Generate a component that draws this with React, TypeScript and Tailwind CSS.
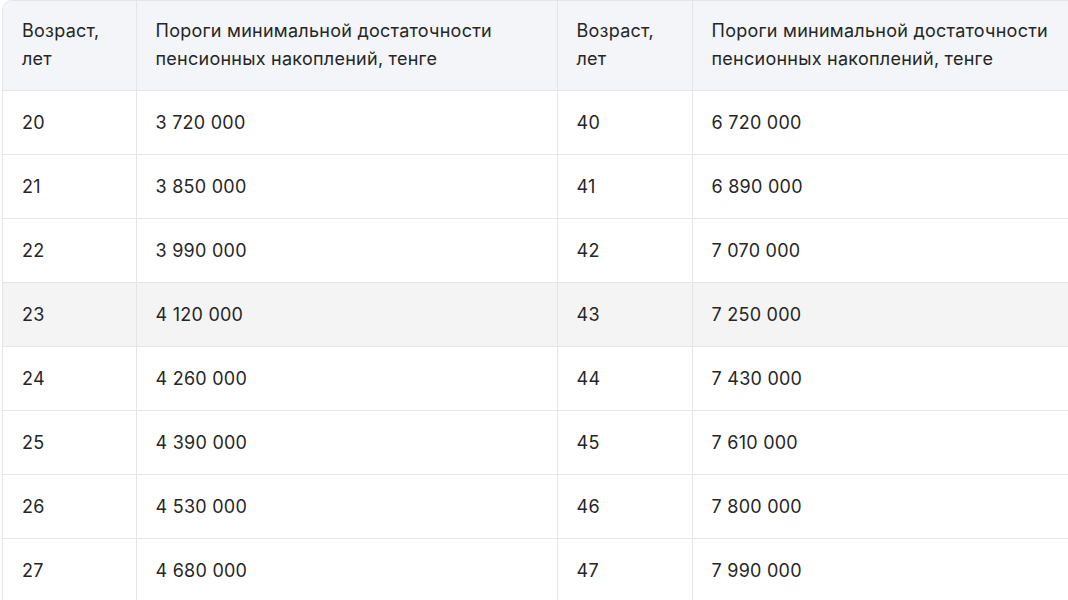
import React from 'react';

const rows = [
  ['20', '3 720 000', '40', '6 720 000'],
  ['21', '3 850 000', '41', '6 890 000'],
  ['22', '3 990 000', '42', '7 070 000'],
  ['23', '4 120 000', '43', '7 250 000'],
  ['24', '4 260 000', '44', '7 430 000'],
  ['25', '4 390 000', '45', '7 610 000'],
  ['26', '4 530 000', '46', '7 800 000'],
  ['27', '4 680 000', '47', '7 990 000'],
];

const App = () => {
  return (
    <div className="w-[1068px] h-[600px] overflow-hidden bg-white">
      <div className="ml-[2px] w-[1090px] rounded-tl-[10px] border-l border-t border-[#e3e5e9] overflow-hidden text-[18px] tracking-[0.25px] text-[#262626] font-['Inter','Open_Sans',sans-serif]">
        <table className="w-[1089px] table-fixed border-collapse">
          <colgroup>
            <col className="w-[133px]" />
            <col className="w-[421px]" />
            <col className="w-[135px]" />
            <col className="w-[400px]" />
          </colgroup>
          <thead>
            <tr className="bg-[#f3f5f8] h-[89px] border-b border-[#e3e5e9]">
              <th className="text-left font-normal align-middle pl-[19px] pr-3 leading-[28px] border-r border-[#e3e5e9]">Возраст, лет</th>
              <th className="text-left font-normal align-middle pl-[19px] pr-3 leading-[28px] border-r border-[#e3e5e9]">Пороги минимальной достаточности пенсионных накоплений, тенге</th>
              <th className="text-left font-normal align-middle pl-[19px] pr-3 leading-[28px] border-r border-[#e3e5e9]">Возраст, лет</th>
              <th className="text-left font-normal align-middle pl-[19px] pr-3 leading-[28px]"><div className="w-[356px]">Пороги минимальной достаточности пенсионных накоплений, тенге</div></th>
            </tr>
          </thead>
          <tbody>
            {rows.map((r, i) => (
              <tr key={i} className={`h-[64px] border-b border-[#e3e5e9] ${i === 3 ? 'bg-[#f4f4f4]' : 'bg-white'}`}>
                {r.map((c, j) => (
                  <td key={j} className={`pl-[19px] align-middle ${j < 3 ? 'border-r border-[#e3e5e9]' : ''}`}>{c}</td>
                ))}
              </tr>
            ))}
          </tbody>
        </table>
      </div>
    </div>
  );
};

export default App;
